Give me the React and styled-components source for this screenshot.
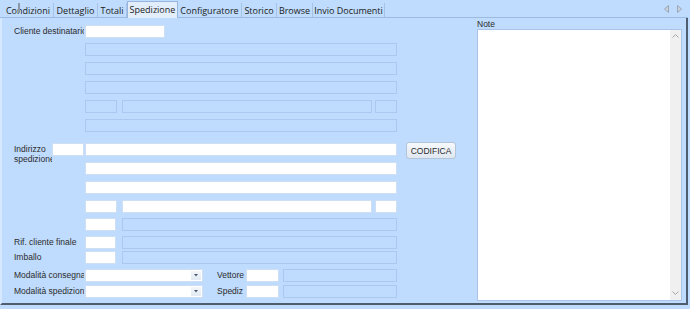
import React from 'react';
import styled, { createGlobalStyle } from 'styled-components';

const GlobalStyle = createGlobalStyle`
  html, body {
    margin: 0;
    padding: 0;
    background: #bfdbfd;
  }
  body {
    width: 690px;
    height: 309px;
    overflow: hidden;
    font-family: "Liberation Sans", Arial, sans-serif;
  }
`;

const Window = styled.div`
  width: 690px;
  height: 309px;
  background: #bfdbfd;
  position: relative;
`;

const TabBar = styled.div`
  width: 688px;
  height: 18px;
  box-sizing: border-box;
  display: flex;
  align-items: flex-end;
  padding-left: 3px;
  border-bottom: 1px solid #9cbbe4;
`;

const Tab = styled.div`
  width: ${p => p.$w}px;
  height: ${p => (p.$active ? 16 : 14)}px;
  box-sizing: border-box;
  display: flex;
  align-items: center;
  justify-content: center;
  font-family: "Open Sans", "Noto Sans", sans-serif;
  font-size: 9px;
  color: #1b1b1b;
  white-space: nowrap;
  border-right: 1px solid #a6c2e6;
  background: ${p => (p.$active ? '#e3eefd' : 'transparent')};
  ${p => p.$active && `
    border: 1px solid #97b6df;
    border-bottom: none;
    margin-bottom: -1px;
    height: 17px;
    padding-bottom: 1px;
  `}
`;

const TabArrows = styled.div`
  margin-left: auto;
  margin-right: 6px;
  align-self: center;
  display: flex;
  gap: 8px;
  padding-top: 1px;
`;

const Caret = styled.div`
  position: absolute;
  left: 18px;
  top: 3px;
  width: 2px;
  height: 10px;
  background: #8a97a8;
`;

const Panel = styled.div`
  width: 688px;
  height: 287px;
  box-sizing: border-box;
  display: flex;
  border-left: 2px solid #d6e8ff;
  border-right: 2px solid #4f5d70;
  border-bottom: 2px solid #4f5d70;
`;

const Form = styled.div`
  width: 475px;
  display: flex;
  flex-direction: column;
  padding-left: 12px;
  box-sizing: border-box;
`;

const Row = styled.div`
  display: flex;
  align-items: flex-start;
  height: 13px;
  margin-top: ${p => p.$mt}px;
`;

const Label = styled.div`
  width: ${p => p.$w}px;
  margin-right: ${p => p.$mr ?? 1}px;
  flex: none;
  overflow: hidden;
  white-space: ${p => (p.$wrap ? 'normal' : 'nowrap')};
  font-size: 8.5px;
  line-height: ${p => (p.$wrap ? '10px' : '13px')};
  color: #2b2b2b;
  margin-left: ${p => p.$ml || 0}px;
  ${p => p.$wrap && 'padding-top: 1px;'}
`;

const Field = styled.div`
  width: ${p => p.$w}px;
  height: 13px;
  flex: none;
  box-sizing: border-box;
  margin-left: ${p => p.$ml || 0}px;
  background: ${p => (p.$off ? 'transparent' : '#ffffff')};
  border: 1px solid ${p => (p.$off ? '#abc8ee' : '#cfdff3')};
`;

const Combo = styled(Field)`
  display: flex;
  justify-content: flex-end;
  padding: 1px;
`;

const ComboButton = styled.div`
  width: 10px;
  height: 9px;
  background: linear-gradient(#f4f7fb, #e2e9f2);
  display: flex;
  align-items: center;
  justify-content: center;
`;

const Button = styled.button`
  margin-left: 9px;
  margin-top: -1px;
  width: 50px;
  height: 17px;
  flex: none;
  border: 1px solid #b4c4d8;
  border-radius: 3px;
  background: linear-gradient(#f7f9fc, #dfe7f1);
  font-family: "Liberation Sans", Arial, sans-serif;
  font-size: 8.5px;
  color: #2b2b2b;
  padding: 0;
`;

const NotesArea = styled.div`
  flex: 1;
  display: flex;
  flex-direction: column;
  padding: 2px 4px 0 1px;
`;

const NotesLabel = styled.div`
  font-size: 8.5px;
  line-height: 9px;
  color: #2b2b2b;
  height: 9px;
`;

const NotesBox = styled.div`
  width: 205px;
  height: 272px;
  box-sizing: border-box;
  border: 1px solid #a9c4e6;
  background: #fff;
  display: flex;
  justify-content: flex-end;
`;

const ScrollBar = styled.div`
  width: 11px;
  background: #f0f0f0;
  display: flex;
  flex-direction: column;
  justify-content: space-between;
  align-items: center;
  padding: 4px 0 5px;
`;

const Chevron = ({ down }) => (
  <svg width="7" height="4" viewBox="0 0 7 4">
    <path d={down ? 'M0.5 0.5 L3.5 3.5 L6.5 0.5' : 'M0.5 3.5 L3.5 0.5 L6.5 3.5'} fill="none" stroke="#a6a6a6" strokeWidth="1" />
  </svg>
);

const TabArrow = ({ right }) => (
  <svg width="5" height="8" viewBox="0 0 5 8">
    <path d={right ? 'M0.5 0.5 L4.5 4 L0.5 7.5 Z' : 'M4.5 0.5 L0.5 4 L4.5 7.5 Z'} fill="#c9d3de" stroke="#8e9aa8" strokeWidth="0.8" />
  </svg>
);

const DropGlyph = () => (
  <svg width="4" height="3" viewBox="0 0 4 3">
    <path d="M0 0 H4 L2 2.5 Z" fill="#4a5a70" />
  </svg>
);

const tabs = [
  { name: 'Condizioni', w: 51 },
  { name: 'Dettaglio', w: 44 },
  { name: 'Totali', w: 29 },
  { name: 'Spedizione', w: 51, active: true },
  { name: 'Configuratore', w: 64 },
  { name: 'Storico', w: 35 },
  { name: 'Browse', w: 36 },
  { name: 'Invio Documenti', w: 72 },
];

const App = () => (
  <Window>
    <GlobalStyle />
    <TabBar>
      {tabs.map(t => (
        <Tab key={t.name} $w={t.w} $active={t.active}>{t.name}</Tab>
      ))}
      <TabArrows>
        <TabArrow />
        <TabArrow right />
      </TabArrows>
    </TabBar>
    <Caret />
    <Panel>
      <Form>
        <Row $mt={7}>
          <Label $w={70}>Cliente destinatario</Label>
          <Field $w={80} />
        </Row>
        <Row $mt={5}><Label $w={70} /><Field $w={312} $off /></Row>
        <Row $mt={6}><Label $w={70} /><Field $w={312} $off /></Row>
        <Row $mt={6}><Label $w={70} /><Field $w={312} $off /></Row>
        <Row $mt={6}>
          <Label $w={70} />
          <Field $w={32} $off />
          <Field $w={250} $ml={5} $off />
          <Field $w={22} $ml={3} $off />
        </Row>
        <Row $mt={6}><Label $w={70} /><Field $w={312} $off /></Row>

        <Row $mt={11}>
          <Label $w={38} $mr={0} $wrap>Indirizzo spedizione</Label>
          <Field $w={32} />
          <Field $w={312} $ml={1} />
          <Button>CODIFICA</Button>
        </Row>
        <Row $mt={6}><Label $w={70} /><Field $w={312} /></Row>
        <Row $mt={6}><Label $w={70} /><Field $w={312} /></Row>
        <Row $mt={6}>
          <Label $w={70} />
          <Field $w={32} />
          <Field $w={250} $ml={5} />
          <Field $w={22} $ml={3} />
        </Row>
        <Row $mt={5}>
          <Label $w={70} />
          <Field $w={31} />
          <Field $w={275} $ml={6} $off />
        </Row>

        <Row $mt={5}>
          <Label $w={70}>Rif. cliente finale</Label>
          <Field $w={31} />
          <Field $w={275} $ml={6} $off />
        </Row>
        <Row $mt={2}>
          <Label $w={70}>Imballo</Label>
          <Field $w={31} />
          <Field $w={275} $ml={6} $off />
        </Row>
        <Row $mt={5}>
          <Label $w={70}>Modalità consegna</Label>
          <Combo $w={118}><ComboButton><DropGlyph /></ComboButton></Combo>
          <Label $w={29} $mr={0} $ml={14}>Vettore</Label>
          <Field $w={33} />
          <Field $w={114} $ml={4} $off />
        </Row>
        <Row $mt={3}>
          <Label $w={70}>Modalità spedizione</Label>
          <Combo $w={118}><ComboButton><DropGlyph /></ComboButton></Combo>
          <Label $w={29} $mr={0} $ml={14}>Spediz</Label>
          <Field $w={33} />
          <Field $w={114} $ml={4} $off />
        </Row>
      </Form>
      <NotesArea>
        <NotesLabel>Note</NotesLabel>
        <NotesBox>
          <ScrollBar>
            <Chevron />
            <Chevron down />
          </ScrollBar>
        </NotesBox>
      </NotesArea>
    </Panel>
  </Window>
);

export default App;
